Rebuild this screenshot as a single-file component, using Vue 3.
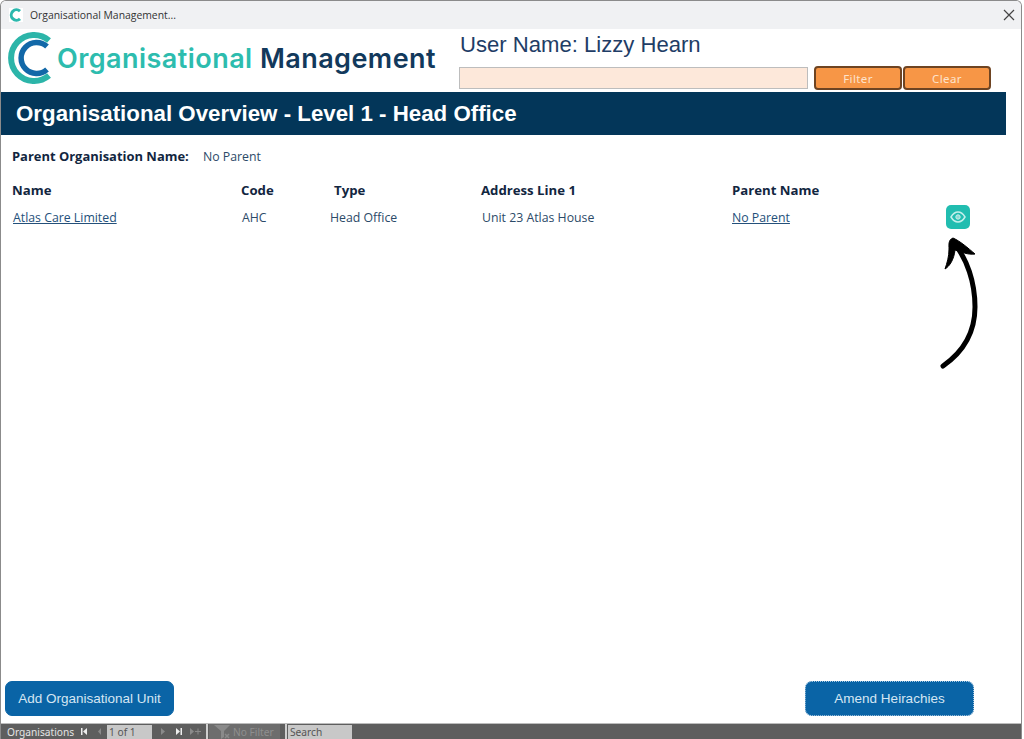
<template>
  <div class="window">
    <div class="titlebar">
      <span class="app-icon">
        <svg width="14" height="14" viewBox="0 0 14 14">
          <path d="M11 3.200A5.200 5.200 0 1 0 11 10.800" fill="none" stroke="#2bb8ad" stroke-width="3" />
        </svg>
      </span>
      <span class="title-text">Organisational Management...</span>
      <svg class="close" width="12" height="12" viewBox="0 0 12 12">
        <path d="M1 1L11 11M11 1L1 11" stroke="#444" stroke-width="1.200" />
      </svg>
    </div>

    <header class="header">
      <div class="logo">
        <svg width="46" height="54" viewBox="0 0 46 54">
          <path d="M42 9.500A23 23 0 1 0 42 44.500" fill="none" stroke="#2cb5a9" stroke-width="6" />
          <path d="M40 15.500A15.500 15.500 0 1 0 40 38.500" fill="none" stroke="#1268a8" stroke-width="5.500" />
        </svg>
        <span class="logo-text"><span class="teal">Organisational</span> <span class="navy">Management</span></span>
      </div>
      <div class="user">
        <div class="user-name">User Name: Lizzy Hearn</div>
        <div class="filter-row">
          <input class="filter-input" type="text" />
          <button class="orange-btn">Filter</button>
          <button class="orange-btn">Clear</button>
        </div>
      </div>
    </header>

    <div class="banner">Organisational Overview - Level 1 - Head Office</div>

    <div class="parent-line">
      <span class="parent-label">Parent Organisation Name:</span>
      <span class="parent-value">No Parent</span>
    </div>

    <div class="grid heads">
      <span v-for="h in heads" :key="h">{{ h }}</span>
    </div>
    <div class="grid row">
      <a class="link">Atlas Care Limited</a>
      <span class="code">AHC</span>
      <span class="type">Head Office</span>
      <span class="addr">Unit 23 Atlas House</span>
      <a class="link">No Parent</a>
      <button class="eye-btn">
        <svg width="16" height="12" viewBox="0 0 16 12">
          <path d="M1 6C3 2.600 5.300 1 8 1s5 1.600 7 5c-2 3.400-4.300 5-7 5S3 9.400 1 6Z" fill="none" stroke="#c4efeb" stroke-width="1.500" />
          <circle cx="8" cy="6" r="2.200" fill="#8edcd5" stroke="#c4efeb" stroke-width="1" />
        </svg>
      </button>
    </div>

    <div class="footer-btns">
      <button class="blue-btn add">Add Organisational Unit</button>
      <button class="blue-btn amend">Amend Heirachies</button>
    </div>

    <div class="navbar">
      <span class="nav-label">Organisations</span>
      <svg class="nav-first" width="6" height="7" viewBox="0 0 6 7"><path d="M0 0H1.500V7H0ZM6 0V7L2 3.500Z" fill="#eee" /></svg>
      <svg class="nav-prev" width="3" height="7" viewBox="0 0 3 7"><path d="M3 0V7L0 3.500Z" fill="#8a8a8a" /></svg>
      <span class="nav-box page">1 of 1</span>
      <svg class="nav-next" width="4" height="7" viewBox="0 0 4 7"><path d="M0 0V7L4 3.500Z" fill="#8a8a8a" /></svg>
      <svg class="nav-last" width="6" height="7" viewBox="0 0 6 7"><path d="M0 0V7L4 3.500ZM4.500 0H6V7H4.500Z" fill="#eee" /></svg>
      <svg class="nav-new" width="11" height="7" viewBox="0 0 11 7"><path d="M0 0V7L4 3.500ZM5 3H11V4H5ZM7.500 .5H8.500V6.500H7.500Z" fill="#8a8a8a" /></svg>
      <span class="nav-sep first"></span>
      <span class="nav-filter">
        <svg width="18" height="14" viewBox="0 0 18 14">
          <path d="M0 0H16L10 6V12L7 14V6Z" fill="#8a8a8a" />
          <path d="M11 9L15 13M15 9L11 13" stroke="#8a8a8a" stroke-width="1.500" />
        </svg>
        No Filter
      </span>
      <span class="nav-sep second"></span>
      <span class="nav-box search">Search</span>
    </div>

    <svg class="arrow" width="44" height="134" viewBox="0 0 44 134">
      <path d="M6 129C26 115 38 95 38 70C38 45 30 22 17 6" fill="none" stroke="#000" stroke-width="5" stroke-linecap="round" />
      <path d="M16 1C11 3 12 8 12 12C12 20 10 26 8 32C13 29 17 22 18 13C24 15 31 18 38 17C31 11 23 4 16 1Z" fill="#000" stroke="#000" stroke-width="1" stroke-linejoin="round" />
    </svg>
  </div>
</template>

<script setup>
const heads = ['Name', 'Code', 'Type', 'Address Line 1', 'Parent Name']
</script>

<style>
html, body {
  margin: 0;
  background: #fff;
}
</style>

<style scoped>
.window {
  position: relative;
  box-sizing: border-box;
  width: 1022px;
  height: 739px;
  display: flex;
  flex-direction: column;
  background: #fff;
  border: 1px solid #8b8b8b;
  border-bottom: 0;
  border-radius: 6px 6px 0 0;
  overflow: hidden;
  font-family: "Open Sans", sans-serif;
  color: #1b3a57;
}

.titlebar {
  height: 28px;
  flex: none;
  display: flex;
  align-items: center;
  padding-left: 8px;
  background: #f0f1f3;
  font-family: "Open Sans", sans-serif;
  font-size: 10.400px;
  color: #333;
}

.app-icon {
  width: 14px;
  height: 14px;
  display: flex;
  background: #fff;
}

.title-text {
  margin-left: 7px;
}

.close {
  margin-left: auto;
  margin-right: 6px;
}

.header {
  height: 63px;
  flex: none;
  display: flex;
}

.logo {
  width: 457px;
  height: 58px;
  display: flex;
  align-items: center;
  padding-left: 6px;
  box-sizing: border-box;
}

.logo-text {
  margin-left: 4px;
  font-family: Inter, sans-serif;
  font-weight: 600;
  font-size: 27px;
  letter-spacing: 0.450px;
  white-space: nowrap;
}

.teal {
  color: #2dbcae;
}

.navy {
  color: #12395c;
}

.user {
  flex: 1;
}

.user-name {
  margin: 3px 0 0 2px;
  font-family: "Liberation Sans", sans-serif;
  font-size: 22.100px;
  line-height: 26px;
  color: #1f3d66;
}

.filter-row {
  display: flex;
  gap: 1px;
  margin-top: 8px;
  margin-left: 1px;
  align-items: center;
}

.filter-input {
  width: 349px;
  height: 22px;
  box-sizing: border-box;
  margin: 0 5px 0 0;
  padding: 0;
  background: #fde8da;
  border: 1px solid #bdbdbd;
}

.orange-btn {
  width: 88px;
  height: 24px;
  padding: 0;
  box-sizing: border-box;
  background: #f79646;
  border: 2px solid #6e4422;
  border-radius: 4px;
  color: #fde3cc;
  font-family: "Noto Sans", sans-serif;
  font-size: 11.500px;
  letter-spacing: 0.400px;
}

.banner {
  width: 1005px;
  height: 43px;
  flex: none;
  box-sizing: border-box;
  padding-left: 15px;
  background: #033659;
  color: #fff;
  font-family: "Liberation Sans", sans-serif;
  font-weight: 700;
  font-size: 22.300px;
  line-height: 44px;
}

.parent-line {
  display: flex;
  align-items: baseline;
  margin: 12px 0 0 11px;
  line-height: 18px;
}

.parent-label {
  width: 191px;
  font-weight: 700;
  font-size: 12.950px;
  color: #12263f;
}

.parent-value {
  font-size: 12.300px;
  color: #2c4a68;
}

.grid {
  display: grid;
  grid-template-columns: 229px 93px 147px 251px 214px auto;
  padding-left: 11px;
}

.heads {
  margin-top: 15px;
  font-weight: 700;
  font-size: 13.200px;
  line-height: 18px;
  color: #12263f;
}

.row {
  margin-top: 5px;
  height: 26px;
  align-items: center;
  font-size: 12.300px;
  color: #2c4a68;
}

.link {
  justify-self: start;
  text-decoration: underline;
  color: #24507a;
}

.row .link:first-child {
  margin-left: 1px;
}

.code {
  margin-left: 1px;
}

.type {
  margin-left: -4px;
}

.addr {
  margin-left: 1px;
}

.eye-btn {
  width: 24px;
  height: 24px;
  padding: 0;
  display: flex;
  align-items: center;
  justify-content: center;
  background: #21bdb0;
  border: 0;
  border-radius: 5px;
}

.footer-btns {
  margin-top: auto;
  display: flex;
  justify-content: space-between;
  padding: 0 47px 7px 4px;
}

.blue-btn {
  height: 35px;
  padding: 0;
  box-sizing: border-box;
  background: #0a64a6;
  color: #d5e6f3;
  border: 1px solid #0a64a6;
  border-radius: 7px;
  font-family: "Liberation Sans", sans-serif;
  font-size: 13.500px;
}

.add {
  width: 169px;
}

.amend {
  width: 169px;
  border: 1px dotted #a9c9e2;
}

.navbar {
  height: 16px;
  flex: none;
  box-sizing: border-box;
  display: flex;
  align-items: center;
  padding-left: 6px;
  background: #5e5e5e;
  border-top: 1px solid #bcbcbc;
  font-family: "Noto Sans", sans-serif;
  font-size: 10.200px;
  color: #e4e4e4;
  overflow: hidden;
}

.nav-label {
  width: 74px;
  white-space: nowrap;
}

.nav-prev {
  margin-left: 11px;
}

.nav-next {
  margin-left: 9px;
}

.nav-last {
  margin-left: 11px;
}

.nav-new {
  margin-left: 8px;
}

.nav-box {
  height: 14px;
  line-height: 14px;
  background: #c8c8c8;
  color: #555;
  padding-left: 2px;
  box-sizing: border-box;
}

.page {
  width: 45px;
  margin-left: 6px;
}

.search {
  width: 64px;
  margin-left: 1px;
}

.nav-sep {
  width: 2px;
  height: 15px;
  background: #cfcfcf;
}

.nav-sep.first {
  margin-left: 5px;
}

.nav-sep.second {
  margin-left: 5px;
}

.nav-filter {
  display: flex;
  align-items: center;
  gap: 1px;
  margin-left: 1px;
  padding-left: 5px;
  box-sizing: border-box;
  height: 15px;
  width: 71px;
  background: #6d6d6d;
  color: #8f8f8f;
}

.arrow {
  position: absolute;
  left: 936px;
  top: 236px;
}
</style>
